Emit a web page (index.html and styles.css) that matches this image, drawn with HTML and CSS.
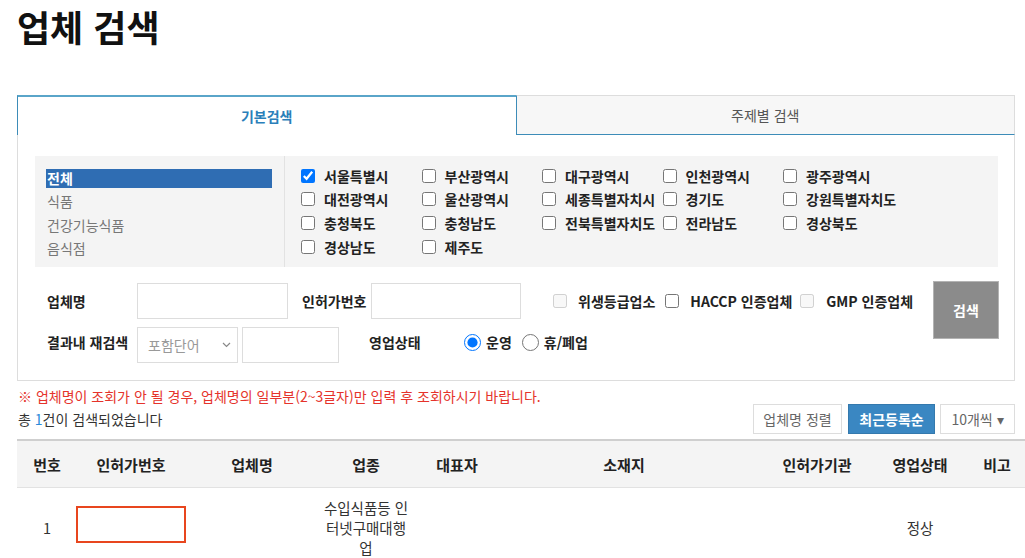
FILE: index.html
```html
<!DOCTYPE html>
<html lang="ko">
  <head>
    <meta charset="UTF-8">
    <meta name=viewport content="width=device-width, initial-scale=1">
    <title>업체 검색</title>
    <link rel="stylesheet" href="styles.css">
  </head>
  <body>
    <div class="page">
      <h1 class="page-title">업체 검색</h1>

      <div class="search-box">
        <div class="tabs">
          <div class="tab active">기본검색</div>
          <div class="tab">주제별 검색</div>
        </div>

        <div class="tab-body">
          <div class="category">
            <ul class="category-list">
              <li class="selected">전체</li>
              <li>식품</li>
              <li>건강기능식품</li>
              <li>음식점</li>
            </ul>
            <div class="region-grid">
              <label class="check"><input type="checkbox" checked>서울특별시</label>
              <label class="check"><input type="checkbox">부산광역시</label>
              <label class="check"><input type="checkbox">대구광역시</label>
              <label class="check"><input type="checkbox">인천광역시</label>
              <label class="check"><input type="checkbox">광주광역시</label>
              <label class="check"><input type="checkbox">대전광역시</label>
              <label class="check"><input type="checkbox">울산광역시</label>
              <label class="check"><input type="checkbox">세종특별자치시</label>
              <label class="check"><input type="checkbox">경기도</label>
              <label class="check"><input type="checkbox">강원특별자치도</label>
              <label class="check"><input type="checkbox">충청북도</label>
              <label class="check"><input type="checkbox">충청남도</label>
              <label class="check"><input type="checkbox">전북특별자치도</label>
              <label class="check"><input type="checkbox">전라남도</label>
              <label class="check"><input type="checkbox">경상북도</label>
              <label class="check"><input type="checkbox">경상남도</label>
              <label class="check"><input type="checkbox">제주도</label>
            </div>
          </div>

          <div class="search-form">
            <div class="form-rows">
              <div class="form-row">
                <span class="field-label">업체명</span>
                <input type="text" class="text-input name-input">
                <span class="field-label permit-label">인허가번호</span>
                <input type="text" class="text-input permit-input">
                <div class="cert-checks">
                  <label class="check"><input type="checkbox" disabled>위생등급업소</label>
                  <label class="check"><input type="checkbox">HACCP 인증업체</label>
                  <label class="check gmp"><input type="checkbox" disabled>GMP 인증업체</label>
                </div>
              </div>
              <div class="form-row second">
                <span class="field-label">결과내 재검색</span>
                <div class="select-box">
                  <span>포함단어</span>
                  <svg width="9" height="6" viewBox="0 0 9 6"><polyline points="1,1 4.5,4.5 8,1" fill="none" stroke="#888" stroke-width="1.2"/></svg>
                </div>
                <input type="text" class="text-input research-input">
                <span class="field-label status-label">영업상태</span>
                <label class="radio"><input type="radio" name="status" checked>운영</label>
                <label class="radio"><input type="radio" name="status">휴/폐업</label>
              </div>
            </div>
            <button class="search-btn">검색</button>
          </div>
        </div>
      </div>

      <p class="notice">※ 업체명이 조회가 안 될 경우, 업체명의 일부분(2~3글자)만 입력 후 조회하시기 바랍니다.</p>

      <div class="result-bar">
        <div class="result-count">총 <em>1</em>건이 검색되었습니다</div>
        <div class="sort-buttons">
          <button class="sort-btn name-sort">업체명 정렬</button>
          <button class="sort-btn recent-sort">최근등록순</button>
          <button class="sort-btn per-page">10개씩 ▾</button>
        </div>
      </div>

      <table class="result-table">
        <colgroup>
          <col style="width:60px">
          <col style="width:108px">
          <col style="width:134px">
          <col style="width:94px">
          <col style="width:88px">
          <col style="width:246px">
          <col style="width:140px">
          <col style="width:66px">
          <col style="width:88px">
        </colgroup>
        <thead>
          <tr>
            <th>번호</th>
            <th>인허가번호</th>
            <th>업체명</th>
            <th>업종</th>
            <th>대표자</th>
            <th>소재지</th>
            <th>인허가기관</th>
            <th>영업상태</th>
            <th>비고</th>
          </tr>
        </thead>
        <tbody>
          <tr>
            <td>1</td>
            <td><div class="masked"></div></td>
            <td></td>
            <td class="wrap">수입식품등 인터넷구매대행업</td>
            <td></td>
            <td></td>
            <td></td>
            <td>정상</td>
            <td></td>
          </tr>
        </tbody>
      </table>
    </div>
  </body>
</html>
```

FILE: styles.css
```css
body {
  margin: 0;
  font-family: "Noto Sans CJK KR", "Noto Sans", sans-serif;
  font-size: 14px;
  color: #333;
  background-color: #fff;
  overflow: hidden;
}

.page {
  width: 998px;
  padding-left: 17px;
}

.page-title {
  margin: 0 0 44px 0;
  padding-top: 1px;
  font-size: 36px;
  line-height: 50px;
  font-weight: bold;
  color: #111;
}

/* tabs */

.tabs {
  display: flex;
  height: 40px;
}

.tab {
  flex: 1;
  box-sizing: border-box;
  text-align: center;
  line-height: 38px;
  color: #555;
  background-color: #f7f7f7;
  border-top: 1px solid #ddd;
  border-right: 1px solid #ddd;
  border-left: 1px solid #3d8cb8;
  border-bottom: 1px solid #3d8cb8;
}

.tab.active {
  background-color: #fff;
  color: #2a7fba;
  font-weight: bold;
  border-top: 2px solid #5aa5c9;
  border-left: 1px solid #3d8cb8;
  border-right: 0;
  border-bottom: 0;
}

.tab-body {
  border: 1px solid #ddd;
  border-top: 0;
  padding: 21px 16px 17px 17px;
}

/* category + region */

.category {
  display: flex;
  height: 111px;
  background-color: #f4f4f4;
}

.category-list {
  list-style: none;
  margin: 0;
  width: 250px;
  box-sizing: border-box;
  padding: 13px 12px 0 11px;
  border-right: 1px solid #e2e2e2;
}

.category-list li {
  line-height: 19px;
  margin-bottom: 4.4px;
  padding-left: 1px;
  color: #777;
}

.category-list li.selected {
  background-color: #2f6db3;
  color: #fff;
  font-weight: bold;
}

.region-grid {
  display: grid;
  grid-template-columns: repeat(5, 120.5px);
  grid-auto-rows: 23.6px;
  padding: 8px 0 0 16px;
}

.check, .radio {
  display: flex;
  align-items: center;
  gap: 9px;
  font-weight: bold;
  color: #222;
  white-space: nowrap;
}

.check input {
  width: 14px;
  height: 14px;
  margin: 0;
}

/* form */

.search-form {
  display: flex;
  align-items: flex-start;
  margin-top: 14px;
  padding-left: 12px;
}

.form-rows {
  padding-top: 2px;
}

.form-row {
  display: flex;
  align-items: center;
  height: 36px;
}

.form-row.second {
  margin-top: 8px;
}

.form-row.second .field-label {
  margin-top: -6px;
}

.field-label {
  width: 90px;
  font-weight: bold;
  color: #222;
  white-space: nowrap;
}

.permit-label {
  width: 69px;
  margin-left: 14px;
}

.status-label {
  width: 95px;
  margin-left: 30px;
}

.text-input {
  box-sizing: border-box;
  height: 36px;
  border: 1px solid #ddd;
  padding: 0 8px;
  font-family: inherit;
  font-size: 14px;
  outline: none;
}

.name-input {
  width: 151px;
}

.permit-input {
  width: 150px;
}

.research-input {
  width: 97px;
  margin-left: 4px;
}

.cert-checks {
  display: flex;
  gap: 10px;
  margin-left: 32px;
}

.cert-checks .check {
  gap: 11px;
}

.cert-checks .gmp {
  margin-left: -2px;
  gap: 12px;
}

.select-box {
  box-sizing: border-box;
  width: 101px;
  height: 36px;
  border: 1px solid #ddd;
  display: flex;
  align-items: center;
  justify-content: space-between;
  padding: 0 6px 0 10px;
  color: #999;
}

.radio {
  gap: 5px;
  margin-right: 10px;
  margin-top: -6px;
}

.radio input {
  width: 17px;
  height: 17px;
  margin: 0;
}

.search-btn {
  margin-left: auto;
  width: 66px;
  height: 58px;
  background-color: #8b8b8b;
  border: 1px solid #b3b3b3;
  color: #fff;
  font-family: inherit;
  font-size: 14px;
  font-weight: bold;
  margin-right: -1px;
}

/* results */

.notice {
  margin: 5px 0 0 1px;
  line-height: 20px;
  color: #e5332b;
}

.result-bar {
  display: flex;
  align-items: center;
  justify-content: space-between;
  height: 30px;
  margin-top: -2px;
}

.result-count {
  padding-left: 1px;
}

.result-count em {
  font-style: normal;
  color: #2b8ad8;
}

.sort-buttons {
  display: flex;
  gap: 5px;
}

.sort-btn {
  box-sizing: border-box;
  height: 30px;
  border: 1px solid #ddd;
  background-color: #fff;
  color: #666;
  font-family: inherit;
  font-size: 14px;
  padding: 0;
}

.name-sort {
  width: 89px;
  margin-right: 1px;
}

.recent-sort {
  width: 87px;
  background-color: #3a87c2;
  border-color: #3479ad;
  color: #fff;
  font-weight: bold;
}

.per-page {
  width: 75px;
}

.result-table {
  width: 1024px;
  margin-top: 5px;
  border-collapse: collapse;
  table-layout: fixed;
  border-top: 2px solid #cfcfcf;
  font-size: 14.5px;
}

.result-table th {
  height: 46px;
  padding: 0 3px;
  background-color: #f4f4f4;
  border-bottom: 1px solid #e2e2e2;
  color: #222;
  font-size: 15px;
  font-weight: bold;
  white-space: nowrap;
}

.result-table td {
  padding: 10px 3px;
  line-height: 20px;
  text-align: center;
  vertical-align: middle;
  color: #333;
}

.result-table td.wrap {
  word-break: break-all;
}

.masked {
  width: 106px;
  height: 33px;
  margin: 0 0 7px -4px;
  border: 2px solid #e8461e;
}
```
